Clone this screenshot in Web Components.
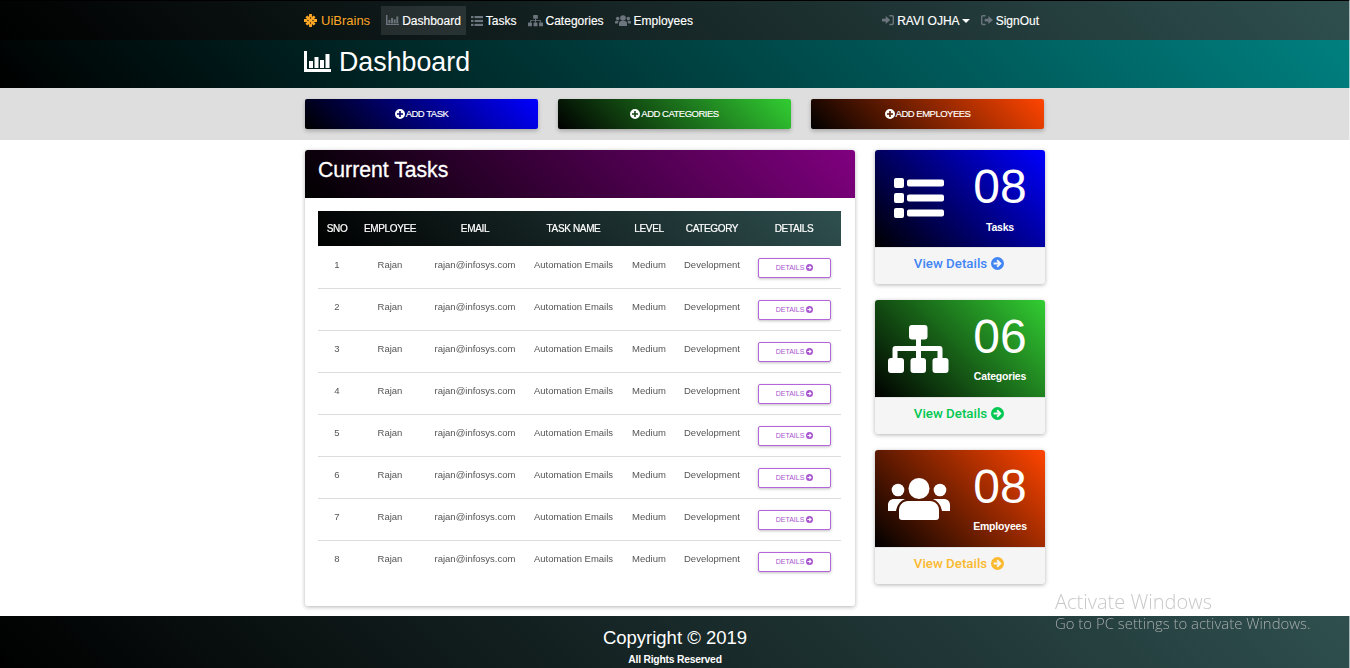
<!DOCTYPE html>
<html lang="en">
<head>
<meta charset="utf-8">
<title>UiBrains Dashboard</title>
<style>
    html, body { margin: 0; height: 100%; }
    body {
        display: flex;
        flex-direction: column;
        height: 668px;
        overflow: hidden;
        font-family: "Liberation Sans", Arial, sans-serif;
        background: #fff;
    }
    /* light sliver down the window's right edge */
    body::after {
        content: "";
        position: fixed;
        top: 0;
        right: 0;
        width: 1px;
        height: 100%;
        background: rgba(255, 255, 255, .6);
    }
    .content {
        flex: 1;
        width: 740px;
        margin: 0 auto;
        padding-top: 10px;
        box-sizing: border-box;
        display: flex;
        gap: 20px;
        align-items: flex-start;
    }
    .side { display: flex; flex-direction: column; gap: 16px; width: 170px; }
</style>
</head>
<body>
<app-nav></app-nav>
<page-header>Dashboard</page-header>
<action-bar>
    <action-button to="#0000ff">ADD TASK</action-button>
    <action-button to="#32cd32">ADD CATEGORIES</action-button>
    <action-button to="#ff4500">ADD EMPLOYEES</action-button>
</action-bar>
<div class="content">
    <task-card heading="Current Tasks"></task-card>
    <div class="side">
        <stat-card icon="tasks" count="08" to="#0000ff" link="#4285f4">Tasks</stat-card>
        <stat-card icon="categories" count="06" to="#32cd32" link="#00c851">Categories</stat-card>
        <stat-card icon="employees" count="08" to="#ff4500" link="#fbb92f">Employees</stat-card>
    </div>
</div>
<page-footer></page-footer>
<activate-mark></activate-mark>

<script>
const ICONS = {
    chart: [27, 21, '<path d="M0 0h3v18h24v3H0z"/><rect x="5" y="10" width="4" height="7"/><rect x="10.500" y="6" width="4" height="11"/><rect x="16" y="9" width="4" height="8"/><rect x="21.500" y="3" width="4" height="14"/>'],
    list: [12, 10, '<rect y="0" width="2.500" height="2.200"/><rect y="3.900" width="2.500" height="2.200"/><rect y="7.800" width="2.500" height="2.200"/><rect x="3.500" y="0" width="8.500" height="2.200"/><rect x="3.500" y="3.900" width="8.500" height="2.200"/><rect x="3.500" y="7.800" width="8.500" height="2.200"/>'],
    sitemap: [16, 12, '<rect x="5.500" y="0" width="5" height="4" rx=".6"/><rect x="0" y="8" width="4.200" height="4" rx=".6"/><rect x="5.900" y="8" width="4.200" height="4" rx=".6"/><rect x="11.800" y="8" width="4.200" height="4" rx=".6"/><path d="M7.500 4h1v1.500h5.200V8h-1V6.500H8.500V8h-1V6.500H3.300V8h-1V5.500h5.200z"/>'],
    users: [16, 11, '<circle cx="8" cy="3" r="2.800"/><circle cx="2.700" cy="3.500" r="1.800"/><circle cx="13.300" cy="3.500" r="1.800"/><path d="M4 11V8.300C4 6.800 5.200 6 6.200 6h3.600C10.800 6 12 6.800 12 8.300V11z"/><path d="M0 8.500V7C0 6 .8 5.700 1.500 5.700h2.300C3.200 6.400 3 7.200 3 8.500zM16 8.500V7c0-1-.8-1.300-1.500-1.300h-2.300c.6.700.8 1.500.8 2.800z"/>'],
    snow: [14, 14, '<path d="M5.500 0h3v14h-3zM0 5.500h14v3H0z"/><path d="M1.500 3.600l2.100-2.100 8.900 8.900-2.100 2.100zM10.400 1.500l2.100 2.100-8.900 8.900-2.100-2.100z"/><circle cx="7" cy="7" r="4.500"/><g fill="#1a1608"><circle cx="7" cy="4.300" r=".7"/><circle cx="7" cy="9.700" r=".7"/><circle cx="4.300" cy="7" r=".7"/><circle cx="9.700" cy="7" r=".7"/></g>'],
    signin: [13, 11, '<path d="M0 4h4V1.200L9 5.500 4 9.800V7H0z"/><path d="M8 0h3a2 2 0 0 1 2 2v7a2 2 0 0 1-2 2H8V9.500h3a.5.500 0 0 0 .5-.5V2a.5.500 0 0 0-.5-.5H8z"/>'],
    signout: [13, 11, '<path d="M5 0H2a2 2 0 0 0-2 2v7a2 2 0 0 0 2 2h3V9.500H2a.5.500 0 0 1-.5-.5V2a.5.500 0 0 1 .5-.5h3z"/><path d="M4 4h4V1.200l5 4.300-5 4.300V7H4z"/>'],
    plus: [10, 10, '<path fill-rule="evenodd" d="M5 0a5 5 0 1 1 0 10A5 5 0 0 1 5 0zM4.200 2v2.200H2v1.600h2.200V8h1.600V5.800H8V4.200H5.800V2z"/>'],
    arrow: [10, 10, '<path fill-rule="evenodd" d="M5 0a5 5 0 1 1 0 10A5 5 0 0 1 5 0zM5.200 2L4.200 3l1.200 1.200H2v1.600h3.400L4.200 7l1 1 3-3z"/>'],
    tasks: [50, 41, '<rect x="0" y="0" width="10" height="10" rx="2"/><rect x="0" y="15" width="10" height="10" rx="2"/><rect x="0" y="30" width="10" height="10" rx="2"/><rect x="13" y="1.500" width="37" height="7" rx="2"/><rect x="13" y="16.500" width="37" height="7" rx="2"/><rect x="13" y="31.500" width="37" height="7" rx="2"/>'],
    categories: [62, 48, '<rect x="21" y="0" width="18.500" height="14.500" rx="3"/><rect x="0" y="33" width="16" height="15" rx="3"/><rect x="22.500" y="33" width="15.500" height="15" rx="3"/><rect x="44.500" y="33" width="16" height="15" rx="3"/><path d="M28 14h5v7h18.500a3 3 0 0 1 3 3v9h-5v-7H33v7h-5v-7H9.500v7h-5v-9a3 3 0 0 1 3-3H28z"/>'],
    employees: [62, 42, '<circle cx="31" cy="10.500" r="10.500"/><circle cx="10" cy="12" r="6.300"/><circle cx="52" cy="12" r="6.300"/><path d="M20 23h22c5 0 9 4 9 9v7a3 3 0 0 1-3 3H14a3 3 0 0 1-3-3v-7c0-5 4-9 9-9z"/><path d="M0 33v-6c0-4 3-6 6-6h11c-5 2-8 6-9 12zM62 33v-6c0-4-3-6-6-6H45c5 2 8 6 9 12z"/>'],
};

class UiIcon extends HTMLElement {
    connectedCallback() {
        const [w, h, body] = ICONS[this.getAttribute('name')];
        const width = this.getAttribute('width') || w;
        const root = this.attachShadow({ mode: 'open' });
        root.innerHTML = `
            <style>
                :host { display: inline-flex; flex: none; }
                svg { display: block; fill: currentColor; overflow: visible; }
            </style>
            <svg width="${width}" height="${width * h / w}" viewBox="0 0 ${w} ${h}">${body}</svg>`;
    }
}

class NavLink extends HTMLElement {
    constructor() {
        super();
        this.attachShadow({ mode: 'open' }).innerHTML = `
            <style>
                :host {
                    display: flex;
                    align-items: center;
                    height: 29px;
                    padding: 0 5px;
                    color: #fff;
                    font-size: 12px;
                    -webkit-text-stroke: .15px #fff;
                    white-space: nowrap;
                }
                :host([active]) { background: rgba(255, 255, 255, .1); }
            </style>
            <slot></slot>`;
    }
}

class AppNav extends HTMLElement {
    constructor() {
        super();
        const ic = (name, width) => `<ui-icon name="${name}" width="${width}" style="color:#6c757d;margin-right:3px"></ui-icon>`;
        this.attachShadow({ mode: 'open' }).innerHTML = `
            <style>
                :host {
                    display: block;
                    height: 40px;
                    box-sizing: border-box;
                    border-top: 1px solid #000;
                    background: linear-gradient(45deg, #000, #2f4f4f);
                }
                .bar {
                    width: 740px;
                    height: 39px;
                    margin: 0 auto;
                    display: flex;
                    align-items: center;
                }
                .brand {
                    display: flex;
                    align-items: center;
                    gap: 4px;
                    margin: 0 11px 0 -1px;
                    color: #ffa726;
                    font-size: 13px;
                }
                .right { margin: 0 1px 0 auto; display: flex; align-items: center; }
                .caret {
                    width: 0;
                    height: 0;
                    margin-left: 2px;
                    border: 4px solid transparent;
                    border-top-color: #fff;
                    border-bottom: 0;
                }
            </style>
            <div class="bar">
                <div class="brand"><ui-icon name="snow" width="13"></ui-icon>UiBrains</div>
                <nav-link active>${ic('chart', 13)}Dashboard</nav-link>
                <nav-link>${ic('list', 12)}Tasks</nav-link>
                <nav-link style="margin-left:1px">${ic('sitemap', 15)}Categories</nav-link>
                <nav-link style="margin-left:1px">${ic('users', 16)}Employees</nav-link>
                <div class="right">
                    <nav-link>${ic('signin', 12)}RAVI OJHA<span class="caret"></span></nav-link>
                    <nav-link style="margin-left:1px">${ic('signout', 12)}SignOut</nav-link>
                </div>
            </div>`;
    }
}

class PageHeader extends HTMLElement {
    constructor() {
        super();
        this.attachShadow({ mode: 'open' }).innerHTML = `
            <style>
                :host {
                    display: block;
                    height: 48px;
                    color: #fff;
                    background: linear-gradient(45deg, #000, #008080);
                }
                div {
                    width: 742px;
                    height: 43px;
                    margin: 0 auto;
                    display: flex;
                    align-items: center;
                    gap: 8px;
                    font-size: 26.800px;
                }
                span { padding-top: 2px; }
            </style>
            <div><ui-icon name="chart" width="27"></ui-icon><span><slot></slot></span></div>`;
    }
}

class ActionBar extends HTMLElement {
    constructor() {
        super();
        this.attachShadow({ mode: 'open' }).innerHTML = `
            <style>
                :host { display: block; height: 52px; background: #dedede; }
                div {
                    width: 740px;
                    margin: 0 auto;
                    padding-top: 11px;
                    display: flex;
                    gap: 20px;
                }
            </style>
            <div><slot></slot></div>`;
    }
}

class ActionButton extends HTMLElement {
    constructor() {
        super();
        this.attachShadow({ mode: 'open' });
    }
    connectedCallback() {
        this.shadowRoot.innerHTML = `
            <style>
                :host {
                    display: flex;
                    align-items: center;
                    justify-content: center;
                    gap: 1px;
                    width: 233px;
                    height: 30px;
                    padding-bottom: 1px;
                    box-sizing: border-box;
                    border-radius: 2px;
                    color: #fff;
                    font-size: 9.500px;
                    letter-spacing: -.5px;
                    -webkit-text-stroke: .15px #fff;
                    background: linear-gradient(45deg, #000, ${this.getAttribute('to')});
                    box-shadow: 0 2px 4px rgba(0, 0, 0, .25);
                }
            </style>
            <ui-icon name="plus"></ui-icon><slot></slot>`;
    }
}

class TaskRow extends HTMLElement {
    constructor() {
        super();
        this.attachShadow({ mode: 'open' });
    }
    connectedCallback() {
        const cells = ['sno', 'employee', 'email', 'task', 'level', 'category']
            .map(k => `<span>${this.getAttribute(k)}</span>`).join('');
        this.shadowRoot.innerHTML = `
            <style>
                :host {
                    display: grid;
                    grid-template-columns: var(--task-cols);
                    height: 41px;
                    border-bottom: 1px solid #ddd;
                    color: #555;
                    font-size: 9.500px;
                    text-align: center;
                }
                :host(:last-child) { border-bottom: 0; }
                span { padding-top: 12px; line-height: 11px; filter: grayscale(1); }
                button {
                    display: flex;
                    align-items: center;
                    justify-content: center;
                    gap: 2px;
                    width: 73px;
                    height: 20px;
                    margin: 11px 0 0 11px;
                    padding: 0 0 1px;
                    background: #fff;
                    border: 1px solid #b565da;
                    border-radius: 2px;
                    box-shadow: 0 1px 3px rgba(0, 0, 0, .25);
                    color: #a855d0;
                    font: 7px "Liberation Sans", Arial, sans-serif;
                }
            </style>
            ${cells}
            <div><button>DETAILS<ui-icon name="arrow" width="7"></ui-icon></button></div>`;
    }
}

class TaskCard extends HTMLElement {
    constructor() {
        super();
        this.attachShadow({ mode: 'open' });
    }
    connectedCallback() {
        const heads = ['SNO', 'EMPLOYEE', 'EMAIL', 'TASK NAME', 'LEVEL', 'CATEGORY', 'DETAILS']
            .map(h => `<span>${h}</span>`).join('');
        let rows = '';
        for (let i = 1; i <= 8; i++) {
            rows += `<task-row sno="${i}" employee="Rajan" email="rajan@infosys.com" task="Automation Emails" level="Medium" category="Development"></task-row>`;
        }
        this.shadowRoot.innerHTML = `
            <style>
                :host {
                    --task-cols: 38px 68px 102px 95px 56px 70px 94px;
                    display: block;
                    width: 550px;
                    height: 456px;
                    border-radius: 3px;
                    background: #fff;
                    box-shadow: 0 1px 4px rgba(0, 0, 0, .3);
                    overflow: hidden;
                }
                h2 {
                    margin: 0;
                    height: 48px;
                    padding: 7px 13px 0;
                    box-sizing: border-box;
                    color: #fff;
                    font-size: 21.200px;
                    font-weight: normal;
                    -webkit-text-stroke: .3px #fff;
                    line-height: 26px;
                    background: linear-gradient(45deg, #000, #800080);
                }
                .table { margin: 13px 14px 0 13px; }
                .head {
                    display: grid;
                    grid-template-columns: var(--task-cols);
                    align-items: center;
                    height: 35px;
                    padding-bottom: 1px;
                    margin-bottom: 1px;
                    box-sizing: border-box;
                    color: #fff;
                    font-size: 10px;
                    letter-spacing: -.35px;
                    -webkit-text-stroke: .2px #fff;
                    text-align: center;
                    background: linear-gradient(45deg, #000, #2f4f4f);
                }
                .head span { filter: grayscale(1); }
            </style>
            <h2>${this.getAttribute('heading')}</h2>
            <div class="table">
                <div class="head">${heads}</div>
                ${rows}
            </div>`;
    }
}

class StatCard extends HTMLElement {
    constructor() {
        super();
        this.attachShadow({ mode: 'open' });
    }
    connectedCallback() {
        const link = this.getAttribute('link');
        this.shadowRoot.innerHTML = `
            <style>
                :host {
                    display: block;
                    height: 134px;
                    border-radius: 3px;
                    background: #f5f5f5;
                    box-shadow: 0 1px 4px rgba(0, 0, 0, .3);
                    overflow: hidden;
                }
                .top {
                    display: grid;
                    grid-template-columns: 80px 70px;
                    height: 97px;
                    padding-left: 10px;
                    color: #fff;
                    background: linear-gradient(45deg, #000, ${this.getAttribute('to')});
                }
                .pic { display: flex; align-items: center; justify-content: center; padding-right: 12px; }
                .num { text-align: center; }
                .count { display: block; margin-top: 10px; font-size: 48px; line-height: 54px; }
                .label { display: block; margin-top: 5px; font-size: 10.500px; line-height: 14px; font-weight: bold; letter-spacing: -.2px; }
                :host([icon="tasks"]) .label { margin-top: 6px; }
                .foot {
                    display: flex;
                    align-items: center;
                    justify-content: center;
                    gap: 4px;
                    height: 36px;
                    box-sizing: border-box;
                    padding: 0 2px 4px 0;
                    border-top: 1px solid #e4e4e4;
                    color: ${link};
                    font: 500 13.300px Roboto, "Liberation Sans", sans-serif;
                }
            </style>
            <div class="top">
                <div class="pic"><ui-icon name="${this.getAttribute('icon')}"></ui-icon></div>
                <div class="num">
                    <span class="count">${this.getAttribute('count')}</span>
                    <span class="label"><slot></slot></span>
                </div>
            </div>
            <div class="foot">View Details <ui-icon name="arrow" width="13"></ui-icon></div>`;
    }
}

class PageFooter extends HTMLElement {
    constructor() {
        super();
        this.attachShadow({ mode: 'open' }).innerHTML = `
            <style>
                :host {
                    display: block;
                    height: 52px;
                    color: #fff;
                    text-align: center;
                    background: linear-gradient(45deg, #000, #2f4f4f);
                }
                p { margin: 0; }
                .a { padding-top: 11px; font-size: 18.500px; line-height: 22px; }
                .b { padding-top: 5px; font-size: 10.300px; line-height: 12px; font-weight: bold; letter-spacing: -.2px; }
            </style>
            <p class="a">Copyright © 2019</p>
            <p class="b">All Rights Reserved</p>`;
    }
}

class ActivateMark extends HTMLElement {
    constructor() {
        super();
        this.attachShadow({ mode: 'open' }).innerHTML = `
            <style>
                :host {
                    position: fixed;
                    left: 1055px;
                    top: 590px;
                    color: rgba(190, 190, 190, .85);
                    font-family: "Open Sans", sans-serif;
                    font-weight: 300;
                    white-space: nowrap;
                }
                div { font-size: 20px; line-height: 24px; }
                small { display: block; font-size: 14.900px; line-height: 18px; }
            </style>
            <div>Activate Windows</div>
            <small>Go to PC settings to activate Windows.</small>`;
    }
}

customElements.define('ui-icon', UiIcon);
customElements.define('nav-link', NavLink);
customElements.define('app-nav', AppNav);
customElements.define('page-header', PageHeader);
customElements.define('action-bar', ActionBar);
customElements.define('action-button', ActionButton);
customElements.define('task-row', TaskRow);
customElements.define('task-card', TaskCard);
customElements.define('stat-card', StatCard);
customElements.define('page-footer', PageFooter);
customElements.define('activate-mark', ActivateMark);
</script>
</body>
</html>
